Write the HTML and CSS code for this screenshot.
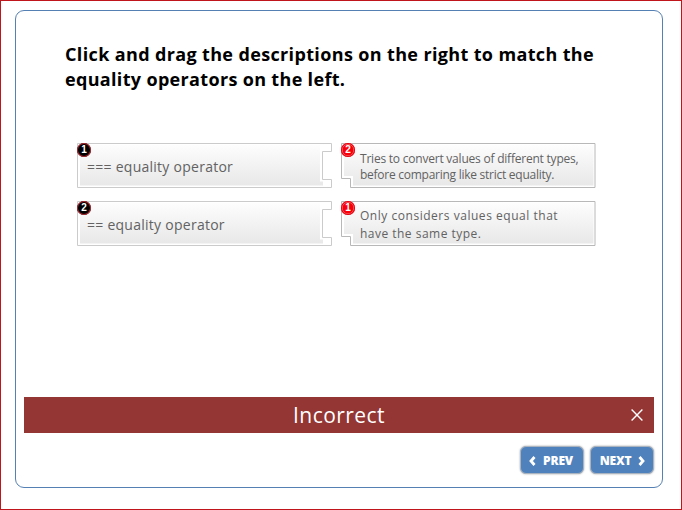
FILE: index.html
```
<!DOCTYPE html>
<html lang="en">
<head>
<meta charset="utf-8">
<title>Equality operators</title>
<link rel="stylesheet" href="styles.css">
</head>
<body>
<svg class="defs" width="0" height="0" aria-hidden="true">
  <defs>
    <linearGradient id="fill" x1="0" y1="0" x2="0" y2="1"><stop offset="0" stop-color="#fdfdfd"/><stop offset="1" stop-color="#e8e8e8"/></linearGradient>
    <symbol id="socket" viewBox="0 0 255 46">
      <path d="M.5.5H254.5V8.5H245.5V36.5H254.5V44.5H.5Z" fill="#fff" stroke="#cbcbcb"/>
      <path d="M3 2H243V38.500H246V42.500H3Z" fill="url(#fill)"/>
    </symbol>
    <symbol id="plug" viewBox="0 0 255 46">
      <path d="M.5.5H254V44.500H9.500V35.500H.5Z" fill="#fff" stroke="#b8b8b8"/>
      <path d="M3 2H252.500V42.500H12V33H3Z" fill="url(#fill)"/>
    </symbol>
  </defs>
</svg>
<main class="panel">
  <h1 class="question"><span class="q1">Click and drag the descriptions on the right to match the</span><br><span class="q2">equality operators on the left.</span></h1>
  <section class="pairs">
    <div class="piece left"><svg class="shape"><use href="#socket"/></svg><span class="badge dark">1</span><p class="op op1">=== equality operator</p></div>
    <div class="piece right"><svg class="shape"><use href="#plug"/></svg><span class="badge">2</span><p class="desc tight"><span class="d1">Tries to convert values of different types,</span><br><span class="d2">before comparing like strict equality.</span></p></div>
    <div class="piece left"><svg class="shape"><use href="#socket"/></svg><span class="badge dark">2</span><p class="op op2">== equality operator</p></div>
    <div class="piece right"><svg class="shape"><use href="#plug"/></svg><span class="badge">1</span><p class="desc loose"><span class="d3">Only considers values equal that</span><br><span class="d4">have the same type.</span></p></div>
  </section>
  <div class="result"><span class="verdict">Incorrect</span>
    <svg class="close" width="12" height="12" viewBox="0 0 12 12"><path d="M.6.6 11.400 11.400M11.400.6.6 11.400" stroke="#fff" stroke-width="1.400"/></svg>
  </div>
  <nav class="nav">
    <button class="btn"><svg width="7" height="10" viewBox="0 0 7 10"><path d="M5.500 1 2 5 5.500 9" fill="none" stroke="#fff" stroke-width="2.800"/></svg><span>PREV</span></button>
    <button class="btn"><span>NEXT</span><svg width="7" height="10" viewBox="0 0 7 10"><path d="M1.500 1 5 5 1.500 9" fill="none" stroke="#fff" stroke-width="2.800"/></svg></button>
  </nav>
</main>
</body>
</html>
```
FILE: styles.css
```
* { box-sizing: border-box; }
body {
  margin: 0;
  width: 682px;
  height: 510px;
  padding: 9px 18px 21px 14px;
  border: 1px solid #c0161b;
  background: #fff;
  font-family: "Open Sans", "Noto Sans", sans-serif;
  overflow: hidden;
}
.defs { position: absolute; }
.panel {
  width: 648px;
  height: 478px;
  border: 1px solid #5580b4;
  border-radius: 9px;
  padding: 31px 8px 0;
  display: flex;
  flex-direction: column;
}
.question {
  margin: 0 0 0 41px;
  height: 101px;
  font-size: 18px;
  line-height: 25px;
  font-weight: 700;
  color: #000;
  white-space: nowrap;
}
.q1 { letter-spacing: 0.36px; }
.q2 { letter-spacing: 0.33px; }
.pairs {
  display: grid;
  grid-template-columns: 255px 255px;
  grid-auto-rows: 46px;
  gap: 12px 9px;
  margin-left: 53px;
  height: 254px;
}
.piece { position: relative; color: #626262; white-space: nowrap; }
.shape { position: absolute; left: 0; top: 0; width: 255px; height: 46px; }
.piece p { position: relative; margin: 0; }
.op { padding: 14px 0 0 10px; font-size: 14px; line-height: 20px; letter-spacing: 0.26px; }
.desc { padding-left: 19px; font-size: 12px; }
.tight { padding-top: 8px; line-height: 16px; letter-spacing: -0.22px; }
.d2 { letter-spacing: -0.26px; }
.loose { padding-top: 6px; line-height: 18px; letter-spacing: 0.53px; }
.d4 { letter-spacing: 0.48px; }
.badge {
  position: absolute;
  z-index: 1;
  left: 0;
  top: 0;
  width: 14px;
  height: 14px;
  border-radius: 50%;
  background: #f8000a;
  box-shadow: inset 0 0 0 1px #e00010, inset 0 0 0 1.500px #ff8080;
  color: #fff;
  font: 700 10px/14px "Liberation Sans", sans-serif;
  text-align: center;
}
.dark { background: #000; box-shadow: inset 0 0 0 1px #b02830; }
.result {
  height: 36px;
  flex: none;
  background: #943634;
  color: #fff;
  position: relative;
  text-align: center;
  font-size: 21px;
  line-height: 36px;
}
.verdict { letter-spacing: 0.45px; }
.close { position: absolute; right: 11px; top: 12px; }
.nav { display: flex; justify-content: flex-end; gap: 6px; margin-top: 13px; }
.btn {
  display: flex;
  align-items: center;
  justify-content: center;
  gap: 7px;
  width: 64px;
  height: 28px;
  padding: 2px 0 0;
  border: 1px solid #a9b4c0;
  border-radius: 6px;
  box-shadow: 0 0 2px #999;
  background: #4f81bd;
  color: #fff;
  font: 800 12px/24px "Open Sans", sans-serif;
  letter-spacing: -0.2px;
}
.btn:first-child { padding-right: 2px; }
.btn:last-child { padding-left: 1px; }
```
